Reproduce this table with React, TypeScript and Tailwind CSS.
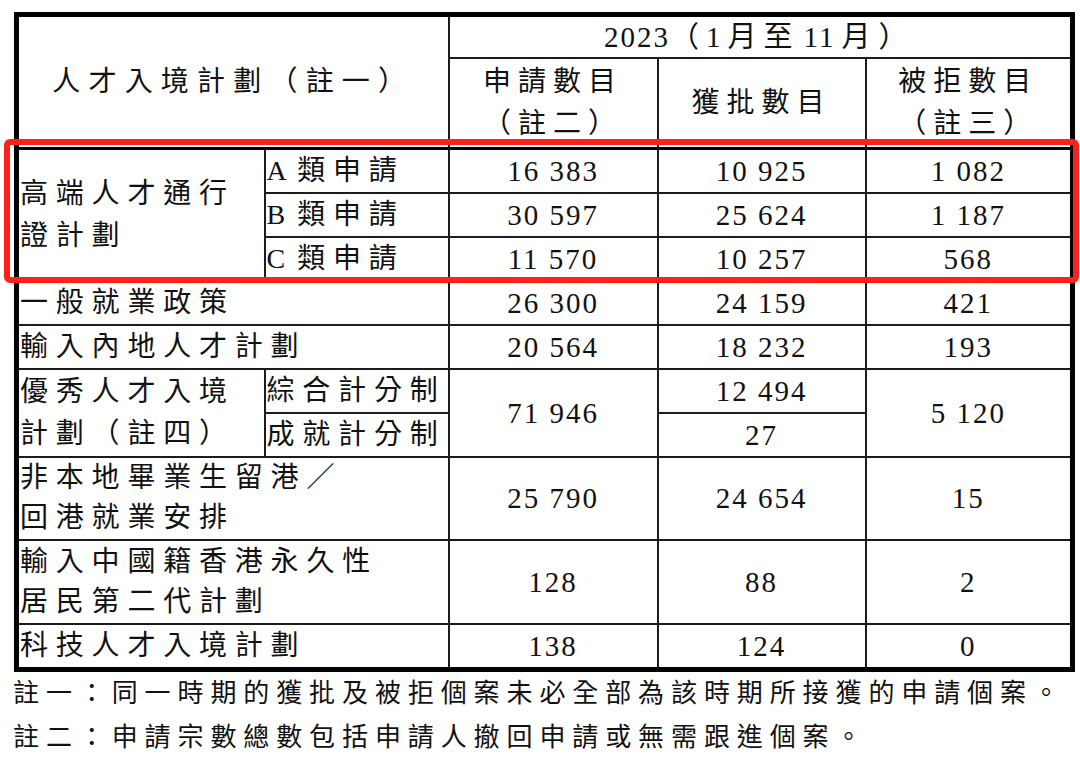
import React from 'react';

// shared cell styles
const cell = 'border-2 border-[#1c1c1c] p-0 align-middle';
const label = 'text-left pl-[1px] text-[28px] leading-[42px] tracking-[7.8px]';
const label2 = 'text-left pl-[1px] text-[28px] leading-[40px] tracking-[7.8px]';
const num = 'text-center text-[29px] leading-[40px] tracking-[2px]';
const headTxt = 'text-center text-[28px] leading-[42px] tracking-[7px]';

type Row = { name: string[]; a: string; b: string; c: string; h: string };

const simpleRows: Row[] = [
  { name: ['一般就業政策'], a: '26 300', b: '24 159', c: '421', h: 'h-[44px]' },
  { name: ['輸入內地人才計劃'], a: '20 564', b: '18 232', c: '193', h: 'h-[44px]' },
];

const tailRows: Row[] = [
  { name: ['非本地畢業生留港／', '回港就業安排'], a: '25 790', b: '24 654', c: '15', h: 'h-[83px]' },
  { name: ['輸入中國籍香港永久性', '居民第二代計劃'], a: '128', b: '88', c: '2', h: 'h-[84px]' },
  { name: ['科技人才入境計劃'], a: '138', b: '124', c: '0', h: 'h-[42px]' },
];

function NameCell({ lines }: { lines: string[] }) {
  return (
    <td colSpan={2} className={`${cell} ${lines.length > 1 ? label2 : label}`}>
      {lines.map((l, i) => (
        <div key={i}>{l}</div>
      ))}
    </td>
  );
}

function PlainRow({ r }: { r: Row }) {
  return (
    <tr className={r.h}>
      <NameCell lines={r.name} />
      <td className={`${cell} ${num}`}>{r.a}</td>
      <td className={`${cell} ${num}`}>{r.b}</td>
      <td className={`${cell} ${num}`}>{r.c}</td>
    </tr>
  );
}

function Kind({ k }: { k: string }) {
  return (
    <>
      <span className="tracking-normal mr-[5px]">{k} </span>類申請
    </>
  );
}

export default function App() {
  return (
    <div className="relative w-[1080px] h-[757px] bg-white text-[#111] font-['Liberation_Serif','Noto_Sans_CJK_TC',serif] overflow-hidden">
      <div className="pl-[14px] pt-[12px]">
        <table className="table-fixed border-collapse border-[5px] border-black w-[1056px]">
          <colgroup>
            <col className="w-[248px]" />
            <col className="w-[184px]" />
            <col className="w-[209px]" />
            <col className="w-[208px]" />
            <col className="w-[207px]" />
          </colgroup>
          <tbody>
            <tr className="h-[43px]">
              <td colSpan={2} rowSpan={2} className={`${cell} ${headTxt} tracking-[8.2px] border-b-[3px] border-b-black`}>
                人才入境計劃（註一）
              </td>
              <td colSpan={3} className={`${cell} text-center text-[29px] leading-[40px]`}>
                <span className="tracking-[2px]">2023</span>
                <span className="tracking-[7px]">（1月至</span>
                <span className="ml-[4px] tracking-[2px]">11</span>
                <span className="ml-[6px] tracking-[8px]">月）</span>
              </td>
            </tr>
            <tr className="h-[90px]">
              <td className={`${cell} ${headTxt} border-b-[3px] border-b-black`}>
                <div>申請數目</div>
                <div>（註二）</div>
              </td>
              <td className={`${cell} ${headTxt} border-b-[3px] border-b-black`}>獲批數目</td>
              <td className={`${cell} ${headTxt} border-b-[3px] border-b-black`}>
                <div>被拒數目</div>
                <div>（註三）</div>
              </td>
            </tr>

            {/* 高端人才通行證計劃 */}
            <tr className="h-[42px]">
              <td rowSpan={3} className={`${cell} ${label}`}>
                <div>高端人才通行</div>
                <div>證計劃</div>
              </td>
              <td className={`${cell} ${label}`}>
                <Kind k="A" />
              </td>
              <td className={`${cell} ${num}`}>16 383</td>
              <td className={`${cell} ${num}`}>10 925</td>
              <td className={`${cell} ${num}`}>1 082</td>
            </tr>
            <tr className="h-[42px]">
              <td className={`${cell} ${label}`}>
                <Kind k="B" />
              </td>
              <td className={`${cell} ${num}`}>30 597</td>
              <td className={`${cell} ${num}`}>25 624</td>
              <td className={`${cell} ${num}`}>1 187</td>
            </tr>
            <tr className="h-[41px]">
              <td className={`${cell} ${label}`}>
                <Kind k="C" />
              </td>
              <td className={`${cell} ${num}`}>11 570</td>
              <td className={`${cell} ${num}`}>10 257</td>
              <td className={`${cell} ${num}`}>568</td>
            </tr>

            {simpleRows.map((r) => (
              <PlainRow key={r.name[0]} r={r} />
            ))}

            {/* 優秀人才入境計劃 */}
            <tr className="h-[44px]">
              <td rowSpan={2} className={`${cell} ${label}`}>
                <div>優秀人才入境</div>
                <div>計劃（註四）</div>
              </td>
              <td className={`${cell} ${label}`}>綜合計分制</td>
              <td rowSpan={2} className={`${cell} ${num}`}>71 946</td>
              <td className={`${cell} ${num}`}>12 494</td>
              <td rowSpan={2} className={`${cell} ${num}`}>5 120</td>
            </tr>
            <tr className="h-[44px]">
              <td className={`${cell} ${label}`}>成就計分制</td>
              <td className={`${cell} ${num}`}>27</td>
            </tr>

            {tailRows.map((r) => (
              <PlainRow key={r.name[0]} r={r} />
            ))}
          </tbody>
        </table>

        <div className="-ml-[1px] text-[26px] leading-[44px] tracking-[6.9px]">
          <p>註一：同一時期的獲批及被拒個案未必全部為該時期所接獲的申請個案。</p>
          <p>註二：申請宗數總數包括申請人撤回申請或無需跟進個案。</p>
        </div>
      </div>

      {/* highlight box */}
      <div className="absolute left-[4px] top-[139px] w-[1075px] h-[144px] border-[6px] border-[#ff2018] rounded-[6px]" />
    </div>
  );
}
